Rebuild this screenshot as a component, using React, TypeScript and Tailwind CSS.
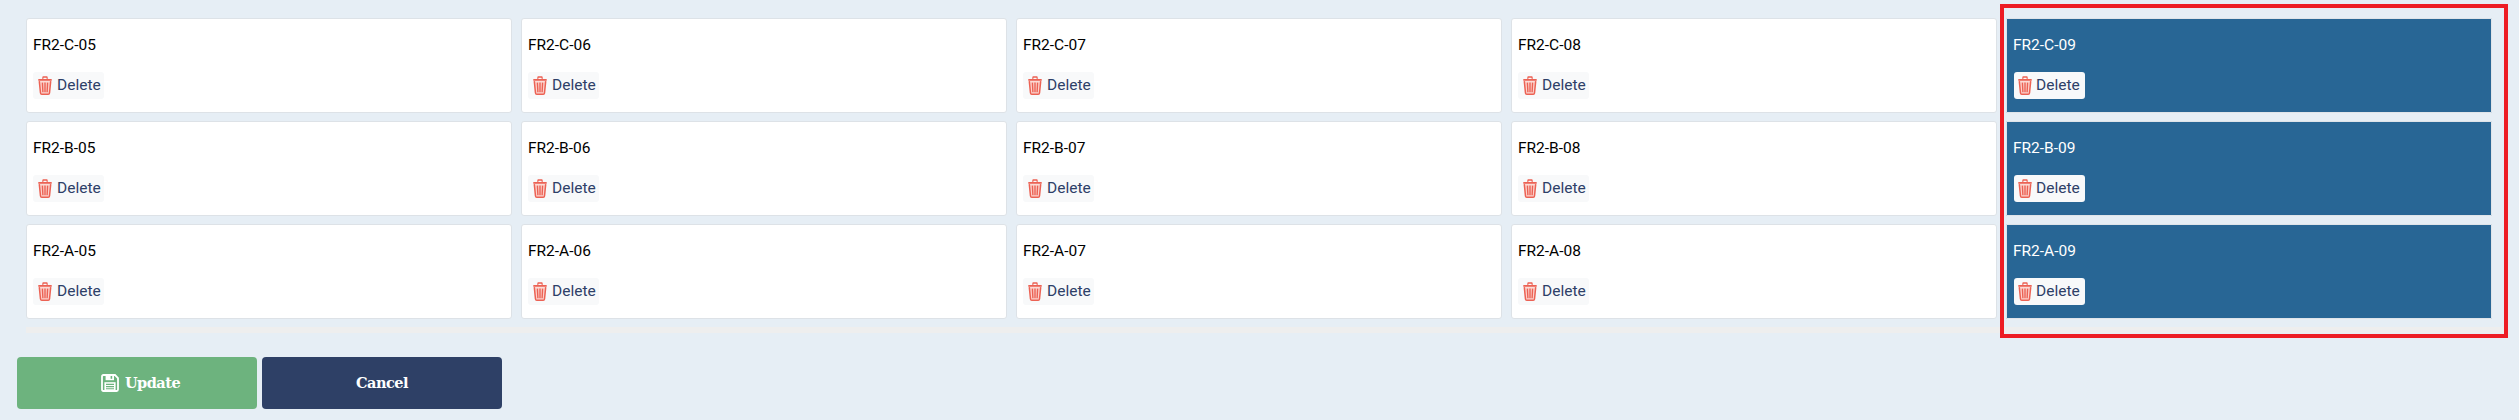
import React from "react";

const Trash = () => (
  <svg width="14" height="19" viewBox="0 0 14 19" fill="none" className="shrink-0">
    <path d="M4.6 2.8 L5.2 1 H8.8 L9.4 2.8" stroke="#ec6254" strokeWidth="1.3" />
    <path d="M0.3 3 H13.7 V4.8 H0.3 Z" fill="#ec6254" />
    <path d="M1.3 5.2 L2.5 17 Q2.6 18.2 3.8 18.2 H10.2 Q11.4 18.2 11.5 17 L12.7 5.2" stroke="#ec6254" strokeWidth="1.5" fill="#fcd2cc" />
    <path d="M4.4 6.6 L4.9 16.2 M7 6.6 V16.2 M9.6 6.6 L9.1 16.2" stroke="#ec6254" strokeWidth="1.4" />
  </svg>
);

const Save = () => (
  <svg width="18" height="18" viewBox="0 0 18 18" fill="none" className="shrink-0">
    <path d="M1 2.4 Q1 1 2.4 1 H14 L17 4 V15.6 Q17 17 15.6 17 H2.4 Q1 17 1 15.6 Z" stroke="#fff" strokeWidth="1.8" />
    <path d="M4.6 1 V6.2 H13 V1" fill="#fff" />
    <path d="M3.4 8.2 H14.6 V16 H3.4 Z" fill="#fff" />
    <path d="M5 10.4 H13 M5 12.6 H13 M5 14.8 H13" stroke="#6db37e" strokeWidth="1.1" />
    <path d="M10.4 2 V4.8" stroke="#6db37e" strokeWidth="1.6" />
  </svg>
);

const rows = ["C", "B", "A"];
const cols = ["05", "06", "07", "08", "09"];

const Card = ({ name, active }: { name: string; active: boolean }) => (
  <div
    className={
      active
        ? "h-[95px] flex flex-col items-start pl-[6px] pt-[16px] border border-[#dfe4e9] bg-[#286695] text-white rounded-[1px]"
        : "h-[95px] flex flex-col items-start pl-[6px] pt-[16px] border border-[#dde2e7] bg-white text-black rounded-[3px]"
    }
  >
    <div className="text-[15.5px] leading-[20px] font-normal">{name}</div>
    <button
      className={
        active
          ? "ml-[1px] mt-[17px] h-[27px] w-[71px] pl-[4px] flex items-center gap-[4px] rounded-[3px] bg-[#f8f9fa] text-[15.5px] text-[#2e4068]"
          : "mt-[17px] h-[27px] w-[71px] pl-[5px] flex items-center gap-[5px] rounded-[3px] bg-[#f8f9fa] text-[15.5px] text-[#2e4068]"
      }
    >
      <Trash />
      <span>Delete</span>
    </button>
  </div>
);

export default function App() {
  return (
    <div
      className="relative h-[420px] w-full overflow-hidden bg-[#e6eef5] pl-[17px] pt-[18px]"
      style={{ fontFamily: "Roboto, sans-serif" }}
    >
      <div className="pl-[9px]">
        <div className="grid w-[2466px] grid-cols-5 gap-x-[9px] gap-y-[8px]">
          {rows.flatMap((r) =>
            cols.map((c) => <Card key={r + c} name={`FR2-${r}-${c}`} active={c === "09"} />)
          )}
        </div>
        <div className="mt-[8px] h-[6px] w-[2478px] bg-[#eeeeee]" />
      </div>
      <div
        className="mt-[24px] flex gap-[5px] text-[14.5px] font-bold tracking-[-0.5px] text-white"
        style={{ fontFamily: '"DejaVu Serif", serif' }}
      >
        <button className="flex h-[52px] w-[240px] items-center justify-center gap-[6px] rounded-[4px] bg-[#6db37e] pl-[7px]">
          <Save />
          <span>Update</span>
        </button>
        <button className="flex h-[52px] w-[240px] items-center justify-center rounded-[4px] bg-[#2e4066]">
          Cancel
        </button>
      </div>
      <div className="pointer-events-none absolute left-[2000px] top-[4px] h-[334px] w-[508px] border-4 border-[#ed1c24]" />
    </div>
  );
}
